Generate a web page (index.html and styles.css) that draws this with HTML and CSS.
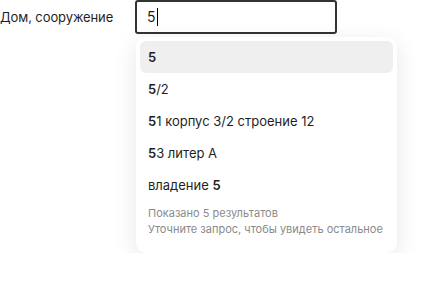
FILE: index.html
```html
<!DOCTYPE html>
<html lang="ru">
<head>
    <meta charset="UTF-8">
    <meta name="viewport" content="width=device-width, initial-scale=1.0">
    <link rel="stylesheet" href="styles.css">
    <title>Дом, сооружение</title>
</head>
<body>
    <!-- поле адреса -->
    <div class="field">
        <label class="field-label" for="house">Дом, сооружение</label>
        <div class="field-control">
            <div class="input" id="house">5<span class="caret"></span></div>
            <!-- подсказки -->
            <div class="suggest">
                <div class="suggest-item active"><b>5</b></div>
                <div class="suggest-item"><b>5</b>/2</div>
                <div class="suggest-item"><b>5</b>1 корпус 3/2 строение 12</div>
                <div class="suggest-item"><b>5</b>3 литер А</div>
                <div class="suggest-item">владение <b>5</b></div>
                <div class="suggest-note">
                    Показано 5 результатов<br>
                    Уточните запрос, чтобы увидеть остальное
                </div>
            </div>
        </div>
    </div>
</body>
</html>
```

FILE: styles.css
```css
:root {
    --text: #1f1f1f;
    --muted: #8a8a8a;
    --border: #333;
    --hover: #efefef;
}
body {
    margin: 0;
    background: #fff;
    font-family: Inter, "Noto Sans", sans-serif;
    font-size: 13px;
    color: var(--text);
}
.field {
    display: flex;
    align-items: flex-start;
}
.field-label {
    width: 135px;
    line-height: 34px;
    letter-spacing: -0.1px;
}
.field-control {
    width: 202px;
}
.input {
    box-sizing: border-box;
    height: 34px;
    border: 2px solid var(--border);
    border-radius: 3px;
    padding: 0 10px;
    line-height: 30px;
    font-size: 14px;
    display: flex;
    align-items: center;
}
.caret {
    display: inline-block;
    width: 1px;
    height: 18px;
    background: #000;
    margin-left: 1px;
}
.suggest {
    box-sizing: border-box;
    width: 261px;
    margin-top: 3px;
    margin-left: 1px;
    padding: 4px;
    background: #fff;
    border-radius: 10px;
    box-shadow: 0 6px 24px rgba(0, 0, 0, 0.1);
}
.suggest-item {
    height: 32px;
    line-height: 32px;
    padding: 0 8px;
    border-radius: 6px;
}
.suggest-item b {
    font-weight: 600;
}
.suggest-item.active {
    background: var(--hover);
}
.suggest-note {
    padding: 4px 8px 12px;
    font-size: 11px;
    line-height: 16px;
    color: var(--muted);
}
```
